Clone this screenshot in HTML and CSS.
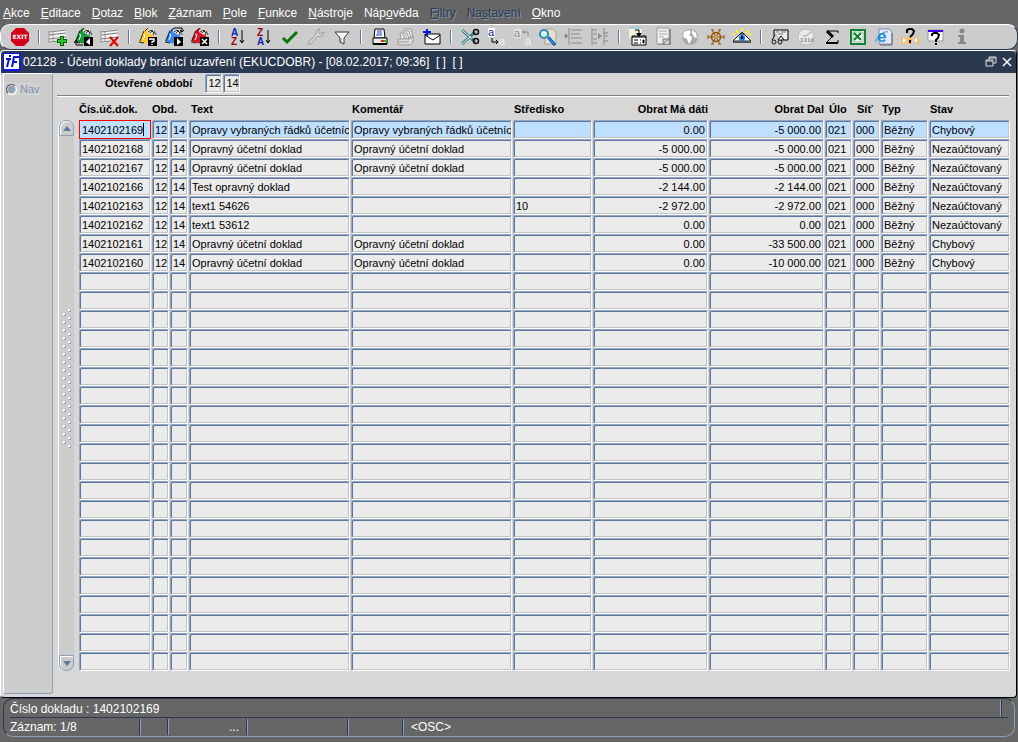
FILE: index.html
```html
<!DOCTYPE html>
<html lang="cs">
<head>
    <meta charset="UTF-8">
    <meta name="viewport" content="width=device-width, initial-scale=1.0">
    <title>02128 - Účetní doklady bránící uzavření</title>
    <link rel="stylesheet" href="styles.css">
</head>
<body>
    <nav class="menu">
        <a href="#"><u>A</u>kce</a>
        <a href="#"><u>E</u>ditace</a>
        <a href="#"><u>D</u>otaz</a>
        <a href="#"><u>B</u>lok</a>
        <a href="#"><u>Z</u>áznam</a>
        <a href="#"><u>P</u>ole</a>
        <a href="#"><u>F</u>unkce</a>
        <a href="#"><u>N</u>ástroje</a>
        <a href="#">Náp<u>o</u>věda</a>
        <a href="#" class="disabled"><u>F</u>iltry</a>
        <a href="#" class="disabled">Na<u>s</u>tavení</a>
        <a href="#"><u>O</u>kno</a>
    </nav>

    <!-- Shared toolbar shapes -->
    <svg class="defs" aria-hidden="true">
        <symbol id="sheet" viewBox="0 0 20 20">
            <path d="M1 4l17-2v11L1 16z" fill="#f4f4f4"/>
            <path d="M1 5l17-2M1 8l17-2M1 12l17-2M1 15l10-1" stroke="#777"/>
            <path d="M1 4v12M5 4v11" stroke="#999" fill="none"/>
        </symbol>
        <symbol id="binder" viewBox="0 0 20 20">
            <path d="M1 14L5 4l4-3 5 2 3 5-5 9-5-1z" fill="currentColor"/>
            <path d="M1 15l5 1M2 14L6 4M7 4l3-3" stroke="#222" fill="none"/>
            <path d="M9 3l4-2 4 3 1 5-4-1-5-3z" fill="#ddd"/>
            <path d="M10 5l3-2 3 3-1 2M12 6l3-3M16 4l2 4" stroke="#333" fill="none"/>
            <path d="M5 7l2 1-2 5" stroke="#fff" fill="none"/>
        </symbol>
    </svg>

    <div class="toolbar">
        <button title="Konec"><svg viewBox="0 0 20 20"><path d="M6 1h8l5 5v8l-5 5H6l-5-5V6z" fill="#d4001a"/><text x="10" y="12" class="exit">EXIT</text></svg></button>
        <i class="sep"></i>
        <button title="Nový záznam"><svg viewBox="0 0 20 20"><use href="#sheet"/><path d="M14 9v10M9 14h10" stroke="#060" stroke-width="4"/><path d="M14 10v8M10 14h8" stroke="#2fc42f" stroke-width="2"/></svg></button>
        <button title="Kopírovat záznam"><svg viewBox="0 0 20 20"><use href="#binder" color="#109a38"/><path d="M10 10h9v9h-9z"/><path d="M16 11v7l-4-3z" fill="#fff"/><path d="M2 14v4h7M0 16l2-3 2 3" stroke="#000" fill="none"/></svg></button>
        <button title="Smazat záznam"><svg viewBox="0 0 20 20"><use href="#sheet"/><path d="M10 10l8 9M18 10l-8 9" stroke="#e00000" stroke-width="2"/></svg></button>
        <i class="sep"></i>
        <button title="Zadat dotaz"><svg viewBox="0 0 20 20"><use href="#binder" color="#ffc928"/><path d="M10 10h9v9h-9z"/><path d="M12 13v-1h4v2l-2 1v1M14 17v1" stroke="#fff" stroke-width="1.500" fill="none"/></svg></button>
        <button title="Provést dotaz"><svg viewBox="0 0 20 20"><use href="#binder" color="#3387ee"/><path d="M10 10h9v9h-9z"/><path d="M13 11v7l4-3z" fill="#fff"/><path d="M10 1h8v3M16 3l2 2 2-2" stroke="#000" fill="none"/></svg></button>
        <button title="Zrušit dotaz"><svg viewBox="0 0 20 20"><use href="#binder" color="#e01222"/><path d="M10 10h9v9h-9z"/><path d="M12 12l5 5M17 12l-5 5" stroke="#fff" stroke-width="1.500"/></svg></button>
        <i class="sep"></i>
        <button title="Třídit vzestupně"><svg viewBox="0 0 20 20"><text x="3" y="9" class="sort blue">A</text><text x="3" y="18" class="sort red">Z</text><path d="M14 3v13M12 13l2 3 2-3" stroke="#000" fill="none"/></svg></button>
        <button title="Třídit sestupně"><svg viewBox="0 0 20 20"><text x="3" y="9" class="sort red">Z</text><text x="3" y="18" class="sort blue">A</text><path d="M14 3v13M12 13l2 3 2-3" stroke="#000" fill="none"/></svg></button>
        <button title="Uložit"><svg viewBox="0 0 20 20"><path d="M3 11l4 4 10-10" fill="none" stroke="#087508" stroke-width="3"/></svg></button>
        <button title="Nástroje"><svg viewBox="0 0 20 20"><path d="M3 15l7-8c-1-3 1-5 4-5l-2 3 2 2 4-2c0 4-3 5-6 4l-7 8-3 0z" fill="#d8d8d8" stroke="#999"/></svg></button>
        <button title="Filtr"><svg viewBox="0 0 20 20"><path d="M3 5h14l-5 6v6l-4-2v-4z" fill="#fff" stroke="#333"/><path d="M5 5h10M9 11v4" stroke="#888"/></svg></button>
        <i class="sep"></i>
        <button title="Tisk"><svg viewBox="0 0 20 20"><path d="M5 2h9l1 9H4z" fill="#fff" stroke="#000"/><path d="M7 4h5M7 6h5M6 8h6" stroke="#2638c9"/><path d="M3 11h14v6H3z" fill="#eee" stroke="#000"/><path d="M11 14h3" stroke="#e22" stroke-width="2"/><path d="M14 14h2" stroke="#2b2" stroke-width="2"/><path d="M3 17h14" stroke="#000" stroke-width="2"/></svg></button>
        <button title="Tisk více"><svg viewBox="0 0 20 20"><path d="M8 2h7l2 8h-3M6 4h7l2 7M4 6h7l2 6H5z" fill="#eee" stroke="#999"/><path d="M2 12h12l3-3v6l-3 3H2z" fill="#ddd" stroke="#999"/><path d="M3 15h10M6 8h4M7 10h4" stroke="#999"/></svg></button>
        <button title="Poslat"><svg viewBox="0 0 20 20"><path d="M3 7h15v10H3z" fill="#fff" stroke="#000"/><path d="M3 8l8 5 7-5" stroke="#000" fill="none"/><path d="M5 2v7M1 5h8" stroke="#0018df" stroke-width="2"/></svg></button>
        <i class="sep"></i>
        <button title="Vyjmout"><svg viewBox="0 0 20 20"><path d="M2 3l13 12M2 17L15 5" stroke="#397d80" stroke-width="3"/><path d="M2 3l10 9M2 17l9-8" stroke="#e8ffff"/><circle cx="16" cy="5" r="2.500" class="ring"/><circle cx="16" cy="14" r="2.500" class="ring"/></svg></button>
        <button title="Kopírovat"><svg viewBox="0 0 20 20"><path d="M2 1h7v9H2z" fill="#fff"/><text x="2" y="9" class="letter blue">a</text><path d="M6 11v4h6M10 13l2 2-2 2" fill="none" stroke="#000"/><text x="13" y="18" class="letter white">a</text></svg></button>
        <button title="Vložit"><svg viewBox="0 0 20 20"><path d="M2 2h7v9H2z" class="pale"/><text x="2" y="10" class="letter gray">a</text><path d="M10 5h6v4M13 3l-2 2 2 2" fill="none" stroke="#888"/><text x="13" y="18" class="letter white">a</text></svg></button>
        <button title="Hledat"><svg viewBox="0 0 20 20"><path d="M7 2h8l3 3v12H7z" fill="#e4e0d4" stroke="#a9a28c"/><path d="M10 10l7 8" stroke="#0048b0" stroke-width="3"/><path d="M10 10l6 7" stroke="#4cf"/><circle cx="6" cy="7" r="4" fill="#c3ffff" stroke="#4387ad" stroke-width="2"/><path d="M4 6h4" stroke="#fff"/></svg></button>
        <button title="Seznam"><svg viewBox="0 0 20 20"><path d="M5 1v17M7 3h11M7 7h9M7 11h11M7 16h11M0 9h4" stroke="#888"/><path d="M1 6l3 3-3 3z" fill="#888"/></svg></button>
        <button title="Strom"><svg viewBox="0 0 20 20"><path d="M2 1v17M3 3h4M3 7h4M3 12h4M3 16h4M14 1v17M14 6h4M14 9h4M14 14h4" stroke="#888"/><path d="M8 6l4 3-4 3z" fill="#888"/></svg></button>
        <i class="sep"></i>
        <button title="Detail"><svg viewBox="0 0 20 20"><path d="M1 1h13v10H1z" fill="#f4f0dc"/><path d="M1 1h13" stroke="#6cf"/><path d="M7 3h4v4" fill="none" stroke="#000"/><path d="M4 9h14v9H4z" fill="#fff" stroke="#000"/><path d="M8 6h6l-3 4z"/><path d="M4 10h14M6 13h4M6 16h4M12 13h1M12 16h1M15 13h1v3h-1z" stroke="#000"/></svg></button>
        <button title="Poznámka"><svg viewBox="0 0 20 20"><path d="M4 2h13v16H4z" fill="#888"/><path d="M3 1h12v16H3z" fill="#f0f0f0" stroke="#999"/><path d="M5 4h8M5 7h8M5 10h5" stroke="#aaa"/><path d="M9 17v-5h6z" fill="#ccc" stroke="#777"/></svg></button>
        <button title="Web"><svg viewBox="0 0 20 20"><circle cx="10" cy="10" r="8" fill="#a9a9a9"/><path d="M4 5l5-2 2 2-2 3 3 2-1 4-2 3-2-5-4-2zM12 3l4 3 1 5-3-1-2-4z" fill="#fff"/></svg></button>
        <button title="Navigátor"><svg viewBox="0 0 20 20"><circle cx="10" cy="10" r="4.500" fill="none" stroke="#925000" stroke-width="1.500"/><path d="M2 10h16M6 3l8 14M14 3L6 17" stroke="#925000"/><path d="M2 8v4M18 8v4M5 3h3M12 3h3M5 17h3M12 17h3" stroke="#925000"/><circle cx="10" cy="10" r="1.500" fill="#dca14a"/></svg></button>
        <button title="Náhled"><svg viewBox="0 0 20 20"><path d="M3 8L1 6M6 6L4 3M10 4V1M14 6l2-3M17 8l2-2" stroke="#ff0" stroke-width="1.500"/><path d="M1 14l9-9 9 9z" fill="#fff" stroke="#222"/><path d="M10 5l-5 6 3-3h4l3 3z" fill="#555"/><circle cx="10" cy="11" r="3" fill="#087cff"/><path d="M10 9v3" stroke="#000" stroke-width="2"/><path d="M1 15h18" stroke="#555" stroke-width="2"/></svg></button>
        <i class="sep"></i>
        <button title="Prohlížení"><svg viewBox="0 0 20 20"><path d="M4 3h14v10h-7M4 3v6" fill="#eee" stroke="#000"/><path d="M6 5h3M11 5h5M8 7h5" stroke="#777"/><circle cx="4" cy="15" r="2" class="ring thin"/><circle cx="10" cy="15" r="2" class="ring thin"/><path d="M2 13l3-5M8 13l3-4 3 4" fill="none" stroke="#000"/></svg></button>
        <button title="Čas"><svg viewBox="0 0 20 20"><circle cx="10" cy="10" r="8" fill="#e9e9e9" stroke="#bbb"/><path d="M7 9h3l5-4" fill="none" stroke="#999"/><text x="4" y="15" class="clock">1314</text></svg></button>
        <button title="Součet"><svg viewBox="0 0 20 20"><path d="M16 6V4H5M5 16h11v-3M10 10l-6 6" fill="none" stroke="#000"/><path d="M5 4l6 6" stroke="#000" stroke-width="3"/><path d="M4 16h12" stroke="#000" stroke-width="2"/></svg></button>
        <button title="Excel"><svg viewBox="0 0 20 20"><path d="M3 3h14v14H3z" fill="#fff" stroke="#168038" stroke-width="2"/><path d="M5 5h10v10H5z" stroke="#86b88c" fill="none"/><path d="M6 6l7 7M13 6l-7 7" stroke="#087d24" stroke-width="2"/></svg></button>
        <button title="Prohlížeč"><svg viewBox="0 0 20 20"><path d="M5 2h10l3 3v12H5z" fill="#e6e9fa" stroke="#8989b1"/><path d="M18 6v12H6" fill="none" stroke="#667"/><text x="3" y="15" class="browser">e</text><path d="M2 15C0 12 10 3 14 5" stroke="#2591d9" fill="none"/></svg></button>
        <button title="Nápověda pole"><svg viewBox="0 0 20 20"><path d="M1 10h4v7H1zM7 10h5v7H7zM15 10h4v7h-4z" fill="#ffb95e"/><path d="M3 11l3 2-3 3zM17 11l-3 2 3 3z" fill="#fff"/><path d="M7 6V3l2-1h3l2 2-1 3-3 3M10 13v3" fill="none" stroke="#000" stroke-width="2"/></svg></button>
        <button title="Nápověda okna"><svg viewBox="0 0 20 20"><path d="M2 3h15v11H2z" fill="#fff" stroke="#999"/><path d="M2 4h15" stroke="#4300ed" stroke-width="2"/><path d="M6 9V7l2-1h3l2 2-1 3-2 2v2M10 16v2" fill="none" stroke="#000" stroke-width="2"/></svg></button>
        <button title="Informace"><svg viewBox="0 0 20 20"><circle cx="10" cy="4" r="2.500" fill="#888"/><path d="M6 8h6v7h2v2H6v-2h2v-5H6z" fill="#888"/></svg></button>
    </div>

    <main class="window">
        <header class="titlebar">
            <svg class="logo" viewBox="0 0 18 18"><path d="M0 0h18v18H0z" fill="#0e18ee"/><path d="M1 1h15v15H1z" fill="#fff"/><path d="M6 3h2M3 6h5M6 6L4 14M9 14l2-10h5M10 9h4" stroke="#0714c7" stroke-width="2" fill="none"/></svg>
            <h1>02128 - Účetní doklady bránící uzavření (EKUCDOBR) - [08.02.2017; 09:36]&nbsp; [ ]&nbsp; [ ]</h1>
            <button title="Obnovit"><svg viewBox="0 0 12 12"><path d="M4 4V1h7v6H8M1 4h7v6H1zM1 5h7M4 2h7" fill="none" stroke="#ddd"/></svg></button>
            <button title="Zavřít"><svg viewBox="0 0 12 12"><path d="M2 2l8 8M10 2l-8 8" stroke="#fff" stroke-width="1.500"/></svg></button>
        </header>
        <div class="workspace">
            <aside class="side">
                <label><input type="radio" name="nav"> Nav</label>
            </aside>
            <section class="content">
                <div class="period">
                    <label for="period-from">Otevřené období</label>
                    <input id="period-from" class="field" value="12">
                    <input class="field" aria-label="Období do" value="14">
                </div>
                <div class="grid">
                    <div class="scrollbar">
                        <button title="Nahoru"><svg viewBox="0 0 8 5"><path d="M0 5l4-5 4 5z"/></svg></button>
                        <div class="grip"></div>
                        <button title="Dolů" class="down"><svg viewBox="0 0 8 5"><path d="M0 0l4 5 4-5z"/></svg></button>
                    </div>
                    <table>
                        <colgroup>
                            <col class="c-doc"><col class="c-m1"><col class="c-m2"><col><col><col class="c-center">
                            <col class="c-sum"><col class="c-sum"><col class="c-code"><col class="c-code"><col class="c-type"><col class="c-state">
                        </colgroup>
                        <thead>
                            <tr>
                                <th>Čís.úč.dok.</th>
                                <th colspan="2">Obd.</th>
                                <th>Text</th>
                                <th>Komentář</th>
                                <th>Středisko</th>
                                <th class="num">Obrat Má dáti</th>
                                <th class="num">Obrat Dal</th>
                                <th class="code">Úlo</th>
                                <th class="code">Síť</th>
                                <th>Typ</th>
                                <th>Stav</th>
                            </tr>
                        </thead>
                        <tbody id="rows"></tbody>
                    </table>
                </div>
            </section>
        </div>
    </main>

    <footer class="status">
        <div class="message">Číslo dokladu : 1402102169</div>
        <div class="cells">
            <span class="s-record">Záznam: 1/8</span>
            <span class="s-small"></span>
            <span class="s-dots">...</span>
            <span class="s-wide"></span>
            <span class="s-mid"></span>
            <span class="s-osc">&lt;OSC&gt;</span>
        </div>
    </footer>

    <script>
        const ROW_COUNT = 29;
        const labels = ['Čís.úč.dok.', 'Měsíc', 'Rok', 'Text', 'Komentář', 'Středisko',
            'Obrat Má dáti', 'Obrat Dal', 'Úlo', 'Síť', 'Typ', 'Stav'];
        const records = [
            ['1402102169', '12', '14', 'Opravy vybraných řádků účetních', 'Opravy vybraných řádků účetních', '', '0.00', '-5 000.00', '021', '000', 'Běžný', 'Chybový'],
            ['1402102168', '12', '14', 'Opravný účetní doklad', 'Opravný účetní doklad', '', '-5 000.00', '-5 000.00', '021', '000', 'Běžný', 'Nezaúčtovaný'],
            ['1402102167', '12', '14', 'Opravný účetní doklad', 'Opravný účetní doklad', '', '-5 000.00', '-5 000.00', '021', '000', 'Běžný', 'Nezaúčtovaný'],
            ['1402102166', '12', '14', 'Test opravný doklad', '', '', '-2 144.00', '-2 144.00', '021', '000', 'Běžný', 'Nezaúčtovaný'],
            ['1402102163', '12', '14', 'text1 54626', '', '10', '-2 972.00', '-2 972.00', '021', '000', 'Běžný', 'Nezaúčtovaný'],
            ['1402102162', '12', '14', 'text1 53612', '', '', '0.00', '0.00', '021', '000', 'Běžný', 'Nezaúčtovaný'],
            ['1402102161', '12', '14', 'Opravný účetní doklad', 'Opravný účetní doklad', '', '0.00', '-33 500.00', '021', '000', 'Běžný', 'Chybový'],
            ['1402102160', '12', '14', 'Opravný účetní doklad', 'Opravný účetní doklad', '', '0.00', '-10 000.00', '021', '000', 'Běžný', 'Chybový']
        ];

        const tbody = document.getElementById('rows');
        for (let i = 0; i < ROW_COUNT; i++) {
            const row = tbody.insertRow();
            if (i === 0) row.className = 'current';
            labels.forEach((label, col) => {
                const input = document.createElement('input');
                input.className = col === 6 || col === 7 ? 'field num' : 'field';
                input.setAttribute('aria-label', label + ' ' + (i + 1));
                input.value = records[i] ? records[i][col] : '';
                row.insertCell().appendChild(input);
            });
        }
    </script>
</body>
</html>
```
FILE: styles.css
```css
* {
    box-sizing: border-box;
}
body {
    margin: 0;
    min-height: 100vh;
    display: flex;
    flex-direction: column;
    background-color: #666;
    font-family: "Liberation Sans", Arial, sans-serif;
    font-size: 12px;
    color: #000;
}
button {
    padding: 0;
    border: 0;
    background: none;
}
.defs {
    display: none;
}

/* Menu */
.menu {
    display: flex;
    gap: 11px;
    height: 24px;
    padding: 2px 3px 0;
    align-items: center;
}
.menu a {
    color: #fff;
    text-decoration: none;
}
.menu .disabled {
    color: #2b3950;
    text-shadow: 1px 1px 0 #8495ad;
}

/* Toolbar */
.toolbar {
    display: flex;
    align-items: center;
    height: 26px;
    padding-left: 6px;
    background-color: #ccc;
    border: 1px solid #fff;
    border-right-color: #2b3950;
    border-bottom-color: #2b3950;
    border-radius: 10px;
}
.toolbar button {
    flex: 0 0 26px;
    height: 22px;
    display: flex;
    align-items: center;
    justify-content: center;
}
.toolbar svg {
    width: 20px;
    height: 20px;
}
.sep {
    flex: 0 0 2px;
    height: 14px;
    margin: 0 5px;
    border-left: 1px solid #5d779e;
    border-right: 1px solid #fff;
}
.exit {
    font: bold 6px "DejaVu Sans", sans-serif;
    fill: #fff;
    text-anchor: middle;
}
.sort {
    font: bold 10px "Liberation Sans", sans-serif;
}
.letter {
    font: 11px "Liberation Sans", sans-serif;
}
.clock {
    font: bold 5px "DejaVu Sans", sans-serif;
    fill: #888;
}
.browser {
    font: bold 17px "Liberation Sans", sans-serif;
    fill: #168bdd;
}
.blue {
    fill: #1422a8;
}
.red {
    fill: #8c0819;
}
.gray {
    fill: #888;
}
.white {
    fill: #f4f4f4;
}
.pale {
    fill: #e4e4e4;
}
.ring {
    fill: none;
    stroke: #111;
    stroke-width: 1.5;
}
.thin {
    stroke-width: 1;
}

/* Window */
.window {
    flex: 1;
    display: flex;
    flex-direction: column;
    margin-right: 1px;
    background-color: #d7d7d7;
    border: 1px solid #fff;
    border-right-color: #000;
    border-bottom-color: #000;
    border-radius: 4px;
}
.titlebar {
    display: flex;
    align-items: center;
    height: 22px;
    padding: 0 1px 0 2px;
    background-color: #2b3950;
    border-radius: 4px 4px 0 0;
    color: #fff;
}
.titlebar h1 {
    flex: 1;
    margin: 0 0 0 2px;
    font-size: 12px;
    font-weight: normal;
}
.titlebar button {
    width: 16px;
    height: 16px;
}
.titlebar button svg {
    display: block;
    width: 12px;
    height: 12px;
    margin: 2px;
}
.logo {
    width: 18px;
    height: 18px;
}
.workspace {
    flex: 1;
    display: flex;
    padding: 0 5px 3px 2px;
}
.side {
    width: 50px;
    padding: 9px 2px;
    background-color: #ccc;
    border: 1px solid #8da0b8;
    border-top-color: #fff;
    border-left-color: #fff;
    border-radius: 3px;
}
.side label {
    display: flex;
    align-items: center;
    gap: 3px;
    width: 34px;
    color: #7b90ab;
    background-color: #d2d2d2;
    font-size: 11px;
}
.side input {
    appearance: none;
    width: 11px;
    height: 11px;
    margin: 0;
    border: 1px solid #555;
    border-right-color: #fff;
    border-bottom-color: #fff;
    border-radius: 50%;
    background-color: #8da0b8;
    box-shadow: inset 0 0 0 1px #d7d7d7;
}
.content {
    flex: 1;
    min-width: 0;
    padding-left: 4px;
}

/* Fields */
.field {
    display: block;
    width: 100%;
    height: 19px;
    padding: 0 0 0 2px;
    border: 1px solid #93a5bf;
    border-right-color: #fff;
    border-bottom-color: #fff;
    border-radius: 2px;
    box-shadow: inset 1px 1px 0 #5d779e, inset -1px -1px 0 #c4c4c4;
    background-color: #ebebeb;
    font: 11px "Liberation Sans", Arial, sans-serif;
    color: #000;
}
.num {
    text-align: right;
}
.field.num {
    padding-right: 2px;
}
.period {
    display: flex;
    align-items: center;
    gap: 1px;
    height: 23px;
    margin-right: 2px;
    padding: 0 0 2px 48px;
    border-bottom: 1px solid #808080;
    box-shadow: 0 1px 0 #fff;
    font-size: 11px;
    font-weight: bold;
}
.period label {
    margin-right: 12px;
}
.period .field {
    width: 17px;
}

/* Documents grid */
.grid {
    display: flex;
    padding-bottom: 23px;
}
.scrollbar {
    flex: 0 0 15px;
    display: flex;
    flex-direction: column;
    justify-content: space-between;
    align-items: center;
    margin: 24px 5px 0 1px;
    background-color: #ccc;
    border-left: 1px solid #fff;
    border-radius: 8px;
}
.scrollbar button {
    width: 15px;
    height: 16px;
    border: 1px solid #8da0b8;
    border-radius: 7px 7px 0 0;
    box-shadow: inset 1px 1px 0 #fff;
    line-height: 0;
}
.scrollbar .down {
    border-radius: 0 0 7px 7px;
}
.scrollbar button svg {
    width: 8px;
    height: 5px;
    fill: #5d779e;
}
.grip {
    width: 8px;
    height: 140px;
    margin-bottom: 34px;
    background-image:
        linear-gradient(#fff, #fff),
        linear-gradient(#8da0b8, #8da0b8),
        linear-gradient(#fff, #fff),
        linear-gradient(#8da0b8, #8da0b8);
    background-size: 2px 8px;
    background: 
        conic-gradient(from 270deg at 2px 2px, #fff 90deg, transparent 0) 5px 0 / 8px 8px,
        conic-gradient(from 270deg at 2px 2px, #fff 90deg, transparent 0) 0 4px / 8px 8px,
        conic-gradient(from 270deg at 2px 2px, #8da0b8 90deg, transparent 0) 6px 1px / 8px 8px,
        conic-gradient(from 270deg at 2px 2px, #8da0b8 90deg, transparent 0) 1px 5px / 8px 8px;
}
table {
    flex: 1;
    width: 100%;
    min-width: 0;
    table-layout: fixed;
    border-collapse: collapse;
}
th {
    height: 24px;
    padding: 1px 0 0;
    font-size: 11px;
    text-align: left;
    white-space: nowrap;
}
th:nth-child(n + 3) {
    padding-left: 2px;
}
th:nth-child(n + 4) {
    padding-left: 1px;
}
th.num {
    padding-right: 1px;
    text-align: right;
}
th.code {
    padding-left: 4px;
}
td {
    height: 19px;
    padding: 0 1px 0 0;
}
.c-doc {
    width: 73px;
}
.c-m1 {
    width: 18px;
}
.c-m2 {
    width: 19px;
}
.c-center {
    width: 80px;
}
.c-sum {
    width: 116px;
}
.c-code {
    width: 28px;
}
.c-type {
    width: 48px;
}
.c-state {
    width: 82px;
}
.current .field {
    background-color: #bfdfff;
}
.current td:first-child {
    position: relative;
}
.current td:first-child .field {
    border-color: #f00;
    border-radius: 0;
    box-shadow: none;
}
/* Text cursor of the active field */
.current td:first-child::after {
    content: "";
    position: absolute;
    left: 64px;
    top: 3px;
    width: 1px;
    height: 13px;
    background-color: #000;
}

/* Status bar */
.status {
    margin: 0 3px 5px;
    padding: 0 6px;
    border: 1px solid #8da0b8;
    border-top-color: #2b3950;
    border-left-color: #2b3950;
    border-radius: 10px;
    color: #fff;
}
.message {
    height: 19px;
    line-height: 20px;
    border-bottom: 1px solid #2b3950;
    background: linear-gradient(90deg, #8da0b8 1px, #2b3950 1px) no-repeat calc(100% - 6px) 1px / 2px 17px;
}
.cells {
    display: flex;
    height: 18px;
    padding: 1px 0;
    line-height: 16px;
}
.cells span {
    border-right: 1px solid #8da0b8;
    box-shadow: inset -1px 0 0 #2b3950;
}
.s-record {
    width: 131px;
}
.s-small {
    width: 28px;
}
.s-dots {
    width: 79px;
    padding-right: 8px;
    text-align: right;
}
.s-wide {
    width: 101px;
}
.s-mid {
    width: 55px;
}
.cells .s-osc {
    padding-left: 7px;
    border: 0;
    box-shadow: none;
}
```
